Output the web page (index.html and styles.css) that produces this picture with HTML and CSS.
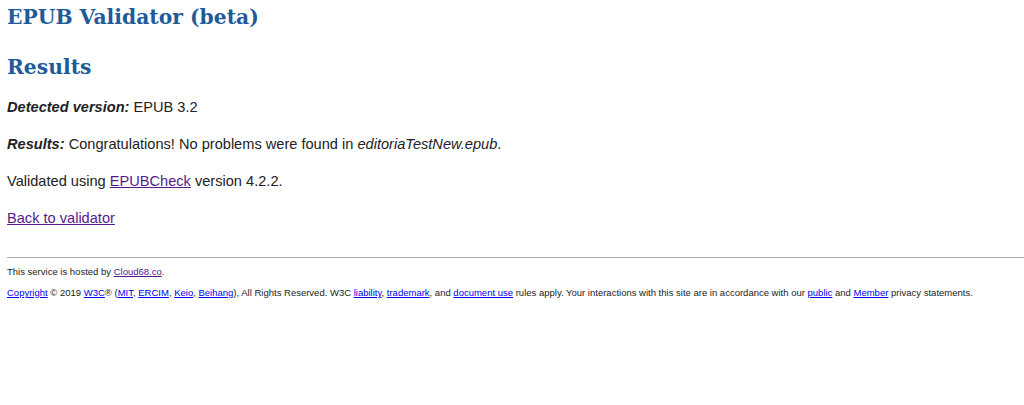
FILE: index.html
```html
<!DOCTYPE html>
<html lang="en">
<head>
    <meta charset="UTF-8">
    <title>EPUB Validator (beta)</title>
    <link rel="stylesheet" href="styles.css">
</head>
<body>
    <h1>EPUB Validator (beta)</h1>

    <h2>Results</h2>

    <p><strong><em>Detected version:</em></strong> EPUB 3.2</p>
    <p><strong><em>Results:</em></strong> Congratulations! No problems were found in <em>editoriaTestNew.epub</em>.</p>
    <p>Validated using <a class="visited" href="#">EPUBCheck</a> version 4.2.2.</p>
    <p><a class="visited" href="#">Back to validator</a></p>

    <hr>

    <footer>
        <p>This service is hosted by <a class="visited" href="#">Cloud68.co</a>.</p>
        <p><a href="#">Copyright</a> &copy; 2019 <a href="#">W3C</a>&reg; (<a href="#">MIT</a>, <a href="#">ERCIM</a>, <a href="#">Keio</a>, <a href="#">Beihang</a>), All Rights Reserved. W3C <a href="#">liability</a>, <a href="#">trademark</a>, and <a href="#">document use</a> rules apply. Your interactions with this site are in accordance with our <a href="#">public</a> and <a href="#">Member</a> privacy statements.</p>
    </footer>
</body>
</html>
```

FILE: styles.css
```css
body {
    font-family: 'Liberation Sans', Arial, sans-serif;
    font-size: 14.6px;
    line-height: 17px;
    color: #222;
    margin: 0;
    padding: 0 7px;
}

h1, h2 {
    font-family: 'DejaVu Serif', Georgia, serif;
    color: #1f5a99;
    font-weight: bold;
    line-height: normal;
}

h1 {
    font-size: 20.3px;
    margin: 5px 0 26px;
}

h2 {
    font-size: 20.3px;
    margin: 0 0 20px;
}

p {
    margin: 0 0 20px;
}

a {
    color: #0000ee;
}

a.visited {
    color: #551a8b;
}

hr {
    border: 0;
    border-top: 1px solid #aaa;
    margin: 30px -7px 8px 0;
}

footer p {
    font-size: 9.5px;
    line-height: normal;
    margin: 0 0 10px;
}
```
